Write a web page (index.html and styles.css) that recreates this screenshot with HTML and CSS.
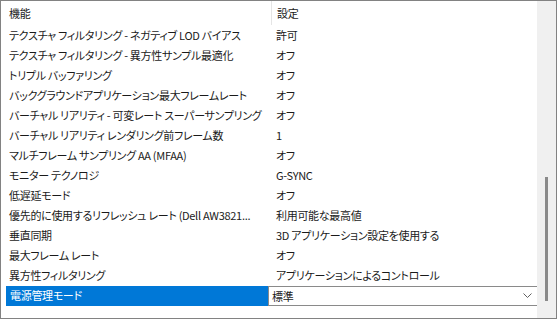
FILE: index.html
```html
<!DOCTYPE html>
<html lang="ja">
<head>
    <meta charset="UTF-8">
    <meta name="viewport" content="width=device-width, initial-scale=1.0">
    <title>3D 設定</title>
    <link rel="stylesheet" href="styles.css">
</head>
<body>
    <div class="frame">
        <div class="list">
            <div class="row head">
                <div class="name">機能</div>
                <div class="value">設定</div>
            </div>
            <div class="row"><div class="name">テクスチャ フィルタリング - ネガティブ LOD バイアス</div><div class="value">許可</div></div>
            <div class="row"><div class="name">テクスチャ フィルタリング - 異方性サンプル最適化</div><div class="value">オフ</div></div>
            <div class="row"><div class="name">トリプル バッファリング</div><div class="value">オフ</div></div>
            <div class="row"><div class="name">バックグラウンドアプリケーション最大フレームレート</div><div class="value">オフ</div></div>
            <div class="row"><div class="name">バーチャル リアリティ - 可変レート スーパーサンプリング</div><div class="value">オフ</div></div>
            <div class="row"><div class="name">バーチャル リアリティ レンダリング前フレーム数</div><div class="value">1</div></div>
            <div class="row"><div class="name">マルチフレーム サンプリング AA (MFAA)</div><div class="value">オフ</div></div>
            <div class="row"><div class="name">モニター テクノロジ</div><div class="value">G-SYNC</div></div>
            <div class="row"><div class="name">低遅延モード</div><div class="value">オフ</div></div>
            <div class="row"><div class="name">優先的に使用するリフレッシュ レート (Dell AW3821...</div><div class="value">利用可能な最高値</div></div>
            <div class="row"><div class="name">垂直同期</div><div class="value">3D アプリケーション設定を使用する</div></div>
            <div class="row"><div class="name">最大フレーム レート</div><div class="value">オフ</div></div>
            <div class="row"><div class="name">異方性フィルタリング</div><div class="value">アプリケーションによるコントロール</div></div>
            <div class="row selected">
                <div class="name">電源管理モード</div>
                <div class="combo">
                    <span>標準</span>
                    <svg class="chevron" width="9" height="6" viewBox="0 0 9 6">
                        <polyline points="0.5,0.5 4.5,4.5 8.5,0.5" fill="none" stroke="#606060" stroke-width="1"/>
                    </svg>
                </div>
            </div>
        </div>
        <div class="scrollbar">
            <div class="thumb"></div>
        </div>
    </div>
</body>
</html>
```

FILE: styles.css
```css
body {
    margin: 0;
    font-family: "Noto Sans CJK JP", "Noto Sans", sans-serif;
    font-size: 11px;
    letter-spacing: -0.3px;
    font-feature-settings: "palt";
    color: #1a1a1a;
    background: #fff;
}
.frame {
    width: 557px;
    height: 319px;
    box-sizing: border-box;
    border: 1px solid #828282;
    display: flex;
    overflow: hidden;
}
.list {
    width: 536px;
    overflow: hidden;
}
.row {
    display: grid;
    grid-template-columns: 270px 1fr;
    height: 20px;
    line-height: 20px;
    white-space: nowrap;
}
.row.head {
    height: 24px;
    line-height: 24px;
}
.name {
    padding-left: 8px;
    overflow: hidden;
}
.value {
    padding-left: 5px;
    overflow: hidden;
}
.head .value {
    border-left: 1px solid #e5e5e5;
}
.selected {
    grid-template-columns: 267px 1fr;
    padding-top: 1px;
    height: 19px;
    line-height: 19px;
}
.selected .name {
    margin-left: 5px;
    padding-left: 4px;
    background: #0078d7;
    color: #fff;
}
.combo {
    display: flex;
    align-items: center;
    justify-content: space-between;
    box-sizing: border-box;
    height: 20px;
    border: 1px solid #8a8a8a;
    border-right: none;
    padding: 0 3px 0 3px;
    background: #fff;
}
.chevron {
    margin-right: 2px;
}
.scrollbar {
    width: 19px;
    background: #f0f0f0;
    padding-top: 176px;
    box-sizing: border-box;
}
.thumb {
    width: 3px;
    height: 124px;
    margin-left: 8px;
    background: #8a8a8a;
}
```
